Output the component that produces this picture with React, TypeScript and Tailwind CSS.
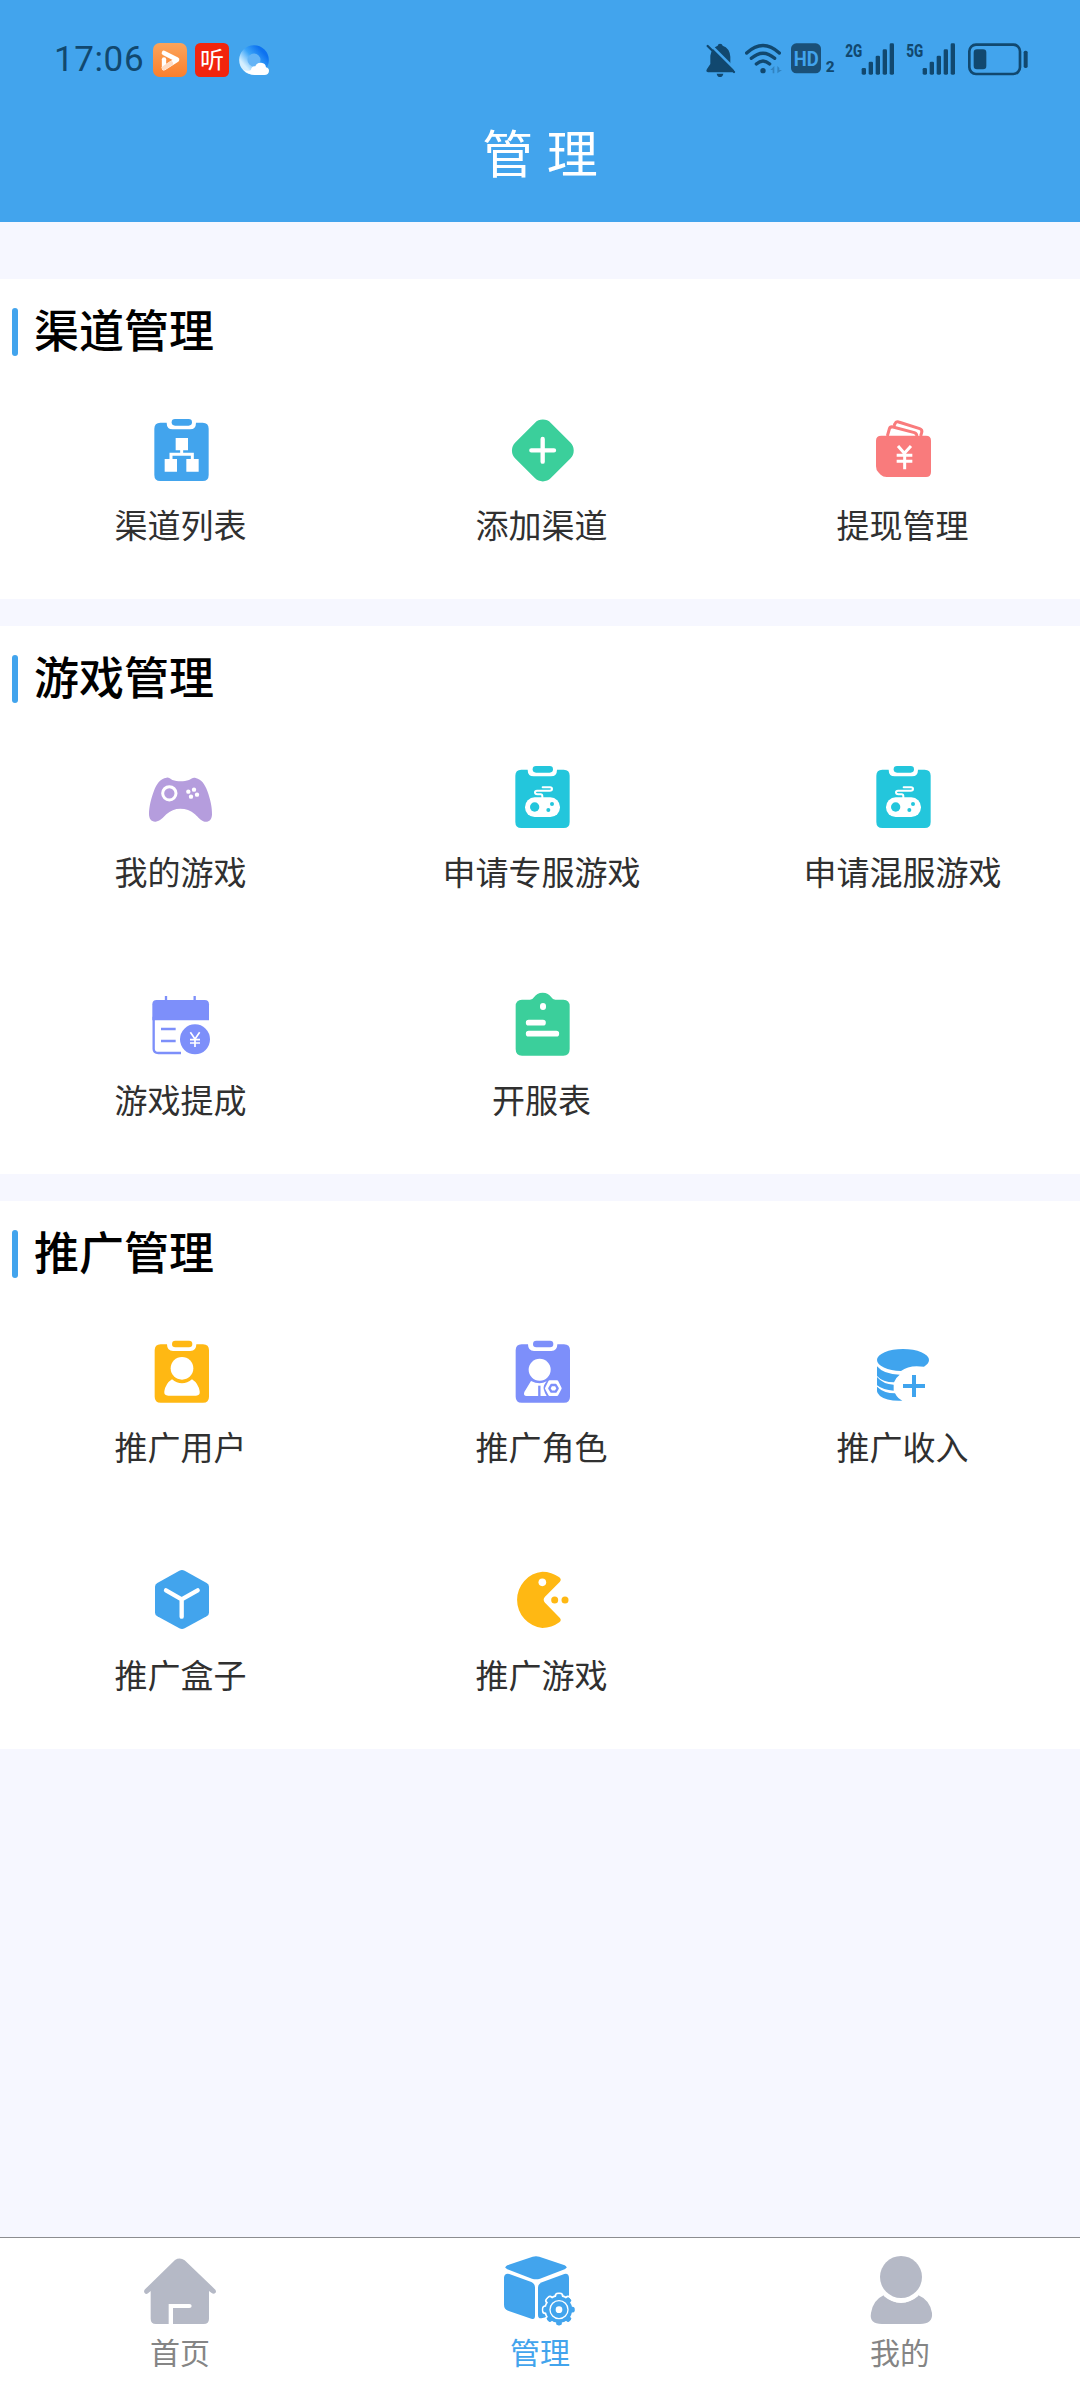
import type { ReactNode } from "react";

const INK = "#11486f";

function Icon({ box, children }: { box: string; children: ReactNode }) {
  return (
    <svg viewBox={`${box} 219 216`} className="block h-[72px] w-[73px]" fill="none">
      {children}
    </svg>
  );
}

/* Clipboard silhouette shared by several menu icons; (x, y) is the top-left of its body. */
function Board({ x, y, color }: { x: number; y: number; color: string }) {
  return (
    <g transform={`translate(${x} ${y})`}>
      <path
        fill={color}
        d="M18 0H37Q37 20 55 20H107Q125 20 125 0H145Q163 0 163 18V157Q163 175 145 175H18Q0 175 0 157V18Q0 0 18 0Z"
      />
      <rect x="52" y="-11" width="61" height="20" rx="10" fill={color} />
    </g>
  );
}

function ChannelListIcon() {
  return (
    <Icon box="432 432">
      <Board x={463} y={458} color="#42a4ed" />
      <path d="M513 570V553H577V570M545 553V538" stroke="#fff" strokeWidth="9" />
      <path fill="#fff" d="M527 504h37v37h-37zM494 567h37v38h-37zM559 567h37v38h-37z" />
    </Icon>
  );
}

function AddIcon() {
  return (
    <Icon box="135 42">
      <rect x="173" y="76" width="151" height="151" rx="34" fill="#3bcf9b" transform="rotate(45 248.500 151.500)" />
      <path d="M214 151H282M248 117V185" stroke="#fff" strokeWidth="13" strokeLinecap="round" />
    </Icon>
  );
}

function WithdrawIcon() {
  return (
    <Icon box="138 42">
      <path d="M202 108L208 87Q210 79 219 81L283 98Q291 101 290 108" stroke="#f97b7c" strokeWidth="9" />
      <path d="M222 78L225 71Q228 63 236 66L299 86Q308 89 305 98L302 108" stroke="#f97b7c" strokeWidth="9" />
      <path
        fill="#f97b7c"
        d="M184 107H318Q333 107 333 122V216Q333 231 318 231H200Q189 231 182 224L175 217Q168 210 168 199V122Q168 107 184 107Z"
      />
      <path d="M234 138L253 160L273 138M254 160V208M230 166H277M230 184H277" stroke="#fff" strokeWidth="9" />
    </Icon>
  );
}

function GamepadIcon() {
  return (
    <Icon box="132 33">
      <path
        fill="#b59ddd"
        d="M200 83C207 82 210 87 217 90C232 95 252 95 267 90C275 86 279 81 287 84C305 89 315 103 322 123C331 147 337 174 336 194C335 209 327 217 314 215C302 213 295 202 285 193C272 181 257 176 241 176C225 176 211 182 199 193C189 203 180 214 167 215C154 216 147 206 147 192C147 172 153 145 162 122C170 102 180 85 200 83Z"
      />
      <circle cx="208" cy="130" r="20" stroke="#fff" strokeWidth="9" />
      <circle cx="282" cy="119" r="6.500" fill="#fff" />
      <circle cx="265" cy="125" r="6.500" fill="#fff" />
      <circle cx="291" cy="134" r="6.500" fill="#fff" />
      <circle cx="273" cy="140" r="6.500" fill="#fff" />
    </Icon>
  );
}

function CommissionIcon() {
  return (
    <Icon box="132 717">
      <path d="M198 738V756M284 738V756" stroke="#7d8ffa" strokeWidth="7" />
      <path d="M161 800V897Q161 909 175 909H243" stroke="#7d8ffa" strokeWidth="7" />
      <path fill="#7d8ffa" d="M170 750H314Q327 750 327 763V811H157V763Q157 750 170 750Z" />
      <path d="M183 837H227M183 873H227" stroke="#7d8ffa" strokeWidth="7" />
      <circle cx="285" cy="868" r="45" fill="#7d8ffa" />
      <path d="M271 847L285 867L299 847M285 867V891M270 869H300M270 879H300" stroke="#fff" strokeWidth="5" />
    </Icon>
  );
}

function ApplyGameIcon() {
  return (
    <Icon box="225 33">
      <Board x={256} y={59} color="#23c6dc" />
      <path
        d="M338 112H360Q366 112 366 117Q366 122 359 122H321Q315 122 315 127Q315 133 322 133H332Q337 133 337 139V145"
        stroke="#fff"
        strokeWidth="6"
        strokeLinecap="round"
      />
      <rect x="285" y="142" width="105" height="59" rx="29" fill="#fff" />
      <circle cx="314" cy="171" r="14" fill="#23c6dc" />
      <circle cx="366" cy="162" r="6" fill="#23c6dc" />
      <circle cx="355" cy="180" r="6" fill="#23c6dc" />
    </Icon>
  );
}

function OpenListIcon() {
  return (
    <Icon box="225 717">
      <path
        fill="#3bcf9b"
        d="M276 749H300Q308 749 312 742Q320 728 338 728Q356 728 364 742Q368 749 376 749H400Q419 749 419 769V897Q419 917 400 917H276Q257 917 257 897V769Q257 749 276 749Z"
      />
      <rect x="330" y="759" width="18" height="21" rx="9" fill="#fff" />
      <path d="M296 818H339M296 851H379" stroke="#fff" strokeWidth="17" strokeLinecap="round" />
    </Icon>
  );
}

function UserIcon() {
  return (
    <Icon box="132 48">
      <Board x={164} y={73} color="#ffb813" />
      <path
        fill="#fff"
        d="M216 178Q230 190 246 190Q262 190 276 178Q295 190 299 214Q301 227 288 227H205Q191 227 193 214Q197 190 216 178Z"
      />
      <circle cx="246" cy="145" r="34" fill="#fff" />
    </Icon>
  );
}

function RoleIcon() {
  return (
    <Icon box="165 48">
      <Board x={197} y={73} color="#7d8ffa" />
      <circle cx="269" cy="149" r="33" fill="#fff" />
      <path fill="#fff" d="M243 183Q256 190 269 190Q279 190 290 184Q279 197 281 207Q284 219 290 228H230Q219 228 223 216Z" />
      <path d="M268 197V228" stroke="#7d8ffa" strokeWidth="7" />
      <path fill="#fff" stroke="#fff" strokeWidth="8" strokeLinejoin="round" d="M299 185H321L331 205L321 224H299L289 205Z" />
      <path stroke="#7d8ffa" strokeWidth="7" strokeLinejoin="round" d="M304 195H317L323 205L317 215H304L298 205Z" />
    </Icon>
  );
}

function IncomeIcon() {
  return (
    <Icon box="138 48">
      <g fill="#3fa4ee">
        <path d="M171 139Q192 164 239 164Q226 174 222 187Q188 187 171 168Z" />
        <path d="M171 171Q190 193 221 194V212Q190 211 171 196Z" />
        <path d="M171 200Q192 220 225 220Q233 236 247 242Q200 244 180 228Q171 220 171 214Z" />
        <path d="M171 120A78 33 0 0 0 243 153Q262 139 290 139L312 140Q327 131 327 120A78 33 0 0 0 171 120Z" />
      </g>
      <path d="M249 198H315M282 165V231" stroke="#3fa4ee" strokeWidth="12" />
    </Icon>
  );
}

function BoxIcon() {
  return (
    <Icon box="132 732">
      <path
        fill="#42a4ed"
        d="M238 752Q246 748 254 752L320 789Q327 793 327 800V878Q327 885 320 889L254 925Q246 929 238 925L172 889Q165 885 165 878V800Q165 793 172 789Z"
      />
      <path d="M198 811L245 838L293 811M245 838V890" stroke="#fff" strokeWidth="13" strokeLinecap="round" strokeLinejoin="round" />
    </Icon>
  );
}

function PacmanIcon() {
  return (
    <Icon box="165 732">
      <path
        fill="#ffb813"
        d="M328 772Q336 779 329 786L285 830Q277 839 285 848L329 893Q336 900 328 907Q305 924 277 924A85 85 0 0 1 277 755Q305 755 328 772Z"
      />
      <circle cx="277" cy="787" r="11.500" fill="#fff" />
      <circle cx="314" cy="840" r="10.500" fill="#ffb813" />
      <circle cx="345" cy="840" r="10.500" fill="#ffb813" />
    </Icon>
  );
}

function MenuItem({ icon, label }: { icon: ReactNode; label: string }) {
  return (
    <div className="flex h-[228px] flex-col items-center pt-[43px]">
      {icon}
      <span className="mt-[18px] text-[33px] leading-[40px] whitespace-nowrap text-[#303030]">{label}</span>
    </div>
  );
}

function Section({ title, children }: { title: string; children: ReactNode }) {
  return (
    <section className="overflow-hidden bg-white">
      <div className="flex h-[92px] items-start pt-[29px] pl-[12px]">
        <span className="h-[48px] w-[6px] rounded-full bg-[#42a4ed]" />
        <h2 className="ml-[16px] text-[45px] leading-[42px] font-medium text-black">{title}</h2>
      </div>
      <div className="grid grid-cols-[361px_361px_361px]">{children}</div>
    </section>
  );
}

function SignalIcon({ label }: { label: string }) {
  return (
    <svg viewBox="441 0 189 240" className="h-[80px] w-[63px]">
      <text
        x="466"
        y="110"
        fontSize="54"
        fontWeight="800"
        fontFamily="Roboto, sans-serif"
        textLength="51"
        lengthAdjust="spacingAndGlyphs"
        fill={INK}
      >
        {label}
      </text>
      <g fill={INK}>
        <rect x="515" y="144" width="13" height="20" rx="4" />
        <rect x="536" y="125" width="13" height="39" rx="4" />
        <rect x="557" y="107" width="13" height="57" rx="4" />
        <rect x="578" y="88" width="13" height="76" rx="4" />
        <rect x="599" y="70" width="13" height="94" rx="4" />
      </g>
    </svg>
  );
}

function StatusBar() {
  return (
    <div className="flex h-[120px] items-center justify-between pr-[47px] pl-[54px]">
      <div className="flex items-center">
        <span className="w-[99px] font-[Roboto,sans-serif] text-[35px] leading-[44px] tracking-[0.6px] whitespace-nowrap text-[#11486f]">
          17:06
        </span>
        <svg viewBox="340 69 102 102" className="size-[34px]">
          <defs>
            <linearGradient id="play" x1="0" y1="0" x2="0" y2="1">
              <stop offset="0" stopColor="#fba45c" />
              <stop offset="1" stopColor="#fb7f2c" />
            </linearGradient>
          </defs>
          <rect x="340" y="69" width="102" height="102" rx="20" fill="url(#play)" />
          <path d="M373 99L412 119L373 144" fill="none" stroke="#fff" strokeWidth="14" strokeLinecap="round" strokeLinejoin="round" />
          <path d="M373 118V144" stroke="#fff" strokeWidth="13" strokeLinecap="round" />
          <path d="M373 144L394 130" stroke="#ffdcc4" strokeWidth="13" strokeLinecap="round" />
        </svg>
        <svg viewBox="465 69 102 102" className="ml-[8px] size-[34px] overflow-visible">
          <rect x="465" y="69" width="102" height="102" rx="16" fill="#f2240d" />
          <text
            x="480"
            y="145"
            fontSize="69"
            fontFamily="Noto Sans CJK SC, sans-serif"
            textLength="72"
            lengthAdjust="spacingAndGlyphs"
            fill="#fff"
          >
            听
          </text>
        </svg>
        <svg viewBox="595 72 96 96" className="ml-[9px] size-[32px]">
          <defs>
            <linearGradient id="ring" x1="0.900" y1="0.100" x2="0.100" y2="0.800">
              <stop offset="0" stopColor="#0d72f0" />
              <stop offset="0.500" stopColor="#3aa4f8" />
              <stop offset="1" stopColor="#d4efff" />
            </linearGradient>
          </defs>
          <circle cx="643" cy="120" r="32" fill="#64b4f6" stroke="url(#ring)" strokeWidth="25" />
          <path
            fill="#fff"
            d="M610 148Q622 156 634 150Q635 138 647 139Q651 127 664 128Q678 129 679 142Q688 144 688 153Q687 165 674 165H645Q624 164 610 148Z"
          />
        </svg>
      </div>
      <div className="flex items-center">
        <svg viewBox="39 0 111 240" className="h-[80px] w-[37px]">
          <path
            fill={INK}
            d="M83 77Q84 71 90 71Q97 71 98 77Q119 84 121 110V132L131 147Q135 156 126 157H54Q46 155 51 147L61 132V107Q64 84 83 77ZM80 161H100Q98 171 90 171Q82 171 80 161Z"
          />
          <path d="M58 71L139 152" stroke="#42a4ed" strokeWidth="8" />
          <path d="M53 78L132 156" stroke={INK} strokeWidth="7" strokeLinecap="round" />
        </svg>
        <svg viewBox="150 0 144 240" className="h-[80px] w-[48px]">
          <g fill="none" stroke={INK} strokeWidth="10" strokeLinecap="round">
            <path d="M170 99Q219 54 268 99" />
            <path d="M184 115Q219 84 254 115" />
            <path d="M199 132Q219 114 239 132" />
          </g>
          <circle cx="219" cy="152" r="8" fill={INK} />
          <path fill={INK} opacity="0.350" d="M253 138V160H248V150H241ZM262 138V160L276 150H268V144Z" />
        </svg>
        <svg viewBox="294 0 147 240" className="h-[80px] w-[49px]">
          <rect x="303" y="70" width="90" height="90" rx="16" fill="#1a5078" />
          <text
            x="311"
            y="137"
            fontSize="62"
            fontWeight="700"
            fontFamily="Roboto, sans-serif"
            textLength="75"
            lengthAdjust="spacingAndGlyphs"
            fill="#42a4ed"
          >
            HD
          </text>
          <text x="407" y="157" fontSize="46" fontWeight="800" fontFamily="Roboto, sans-serif" fill={INK}>
            2
          </text>
        </svg>
        <SignalIcon label="2G" />
        <div className="mr-[2px] -ml-[2px] h-[80px]">
          <SignalIcon label="5G" />
        </div>
        <svg viewBox="819 0 210 240" className="h-[80px] w-[70px]">
          <rect x="838" y="74" width="152" height="88" rx="20" fill="none" stroke={INK} strokeWidth="8" />
          <rect x="851" y="88" width="38" height="60" rx="10" fill={INK} />
          <rect x="1001" y="92" width="12" height="52" rx="5" fill={INK} />
        </svg>
      </div>
    </div>
  );
}

function HomeTabIcon() {
  return (
    <svg viewBox="54 72 252 252" className="size-[84px]" fill="none">
      <path
        fill="#b5b9c6"
        d="M165 105Q180 96 194 106L286 194Q290 200 286 204Q281 209 275 204L267 198V281Q267 297 251 297H159V249H208Q215 249 215 243Q215 237 208 237H146V297H108Q92 297 92 281V198L84 205Q78 209 74 204Q70 199 75 193Z"
      />
    </svg>
  );
}

const TEETH = [0, 45, 90, 135, 180, 225, 270, 315];

function ManageTabIcon() {
  return (
    <svg viewBox="1134 72 252 252" className="size-[84px]" fill="none">
      <g fill="#42a4ed">
        <path d="M1238 95Q1248 92 1258 95L1334 121Q1345 127 1334 133L1260 161Q1248 165 1236 161L1162 133Q1151 127 1162 121Z" />
        <path d="M1168 147L1234 171Q1245 176 1245 188V273Q1245 285 1234 281L1164 257Q1152 252 1152 239V158Q1153 144 1168 147Z" />
        <path d="M1333 147L1266 172Q1254 177 1254 188V270Q1254 281 1264 280L1347 262V158Q1346 144 1333 147Z" />
      </g>
      <g fill="#42a4ed" stroke="#fff" strokeWidth="5">
        {TEETH.map((a) => (
          <rect key={a} x="1306" y="205" width="22" height="30" rx="8" transform={`rotate(${a} 1317 254)`} />
        ))}
        <circle cx="1317" cy="254" r="42" />
      </g>
      <g fill="#42a4ed">
        {TEETH.map((a) => (
          <rect key={a} x="1308.500" y="207.500" width="17" height="28" rx="6" transform={`rotate(${a} 1317 254)`} />
        ))}
      </g>
      <circle cx="1317" cy="254" r="27" stroke="#fff" strokeWidth="4" />
      <circle cx="1317" cy="254" r="10" fill="#fff" />
    </svg>
  );
}

function MineTabIcon() {
  return (
    <svg viewBox="0 0 84 84" className="size-[84px]" fill="none">
      <path
        fill="#b5b9c6"
        d="M26 46Q34 54 43 54Q52 54 60 46Q72 51 74 64Q75 75 62 75H24Q11 75 13 64Q15 51 26 46Z"
      />
      <circle cx="43" cy="28" r="21" fill="#b5b9c6" />
      <path d="M27 46Q34 52 43 52Q52 52 59 46" stroke="#fff" strokeWidth="3" strokeLinecap="round" />
    </svg>
  );
}

function Tab({ icon, label, active = false }: { icon: ReactNode; label: string; active?: boolean }) {
  return (
    <div className="flex flex-col items-center pt-[11px]">
      {icon}
      <span className={`-mt-px text-[30px] leading-[38px] ${active ? "text-[#42a4ed]" : "text-[#858585]"}`}>{label}</span>
    </div>
  );
}

export default function App() {
  return (
    <div className="flex h-[2388px] w-[1080px] flex-col overflow-hidden bg-[#f6f7ff] font-['Noto_Sans_CJK_SC',sans-serif]">
      <header className="h-[222px] shrink-0 bg-[#42a4ed]">
        <StatusBar />
        <h1 className="text-center text-[51px] leading-[62px] text-white [word-spacing:2px]">管 理</h1>
      </header>
      <main className="flex flex-1 flex-col gap-[27px] pt-[57px]">
        <Section title="渠道管理">
          <MenuItem icon={<ChannelListIcon />} label="渠道列表" />
          <MenuItem icon={<AddIcon />} label="添加渠道" />
          <MenuItem icon={<WithdrawIcon />} label="提现管理" />
        </Section>
        <Section title="游戏管理">
          <MenuItem icon={<GamepadIcon />} label="我的游戏" />
          <MenuItem icon={<ApplyGameIcon />} label="申请专服游戏" />
          <MenuItem icon={<ApplyGameIcon />} label="申请混服游戏" />
          <MenuItem icon={<CommissionIcon />} label="游戏提成" />
          <MenuItem icon={<OpenListIcon />} label="开服表" />
        </Section>
        <Section title="推广管理">
          <MenuItem icon={<UserIcon />} label="推广用户" />
          <MenuItem icon={<RoleIcon />} label="推广角色" />
          <MenuItem icon={<IncomeIcon />} label="推广收入" />
          <MenuItem icon={<BoxIcon />} label="推广盒子" />
          <MenuItem icon={<PacmanIcon />} label="推广游戏" />
        </Section>
      </main>
      <nav className="grid h-[151px] shrink-0 grid-cols-3 border-t border-[#8c8d90] bg-white">
        <Tab icon={<HomeTabIcon />} label="首页" />
        <Tab icon={<ManageTabIcon />} label="管理" active />
        <Tab icon={<MineTabIcon />} label="我的" />
      </nav>
    </div>
  );
}
